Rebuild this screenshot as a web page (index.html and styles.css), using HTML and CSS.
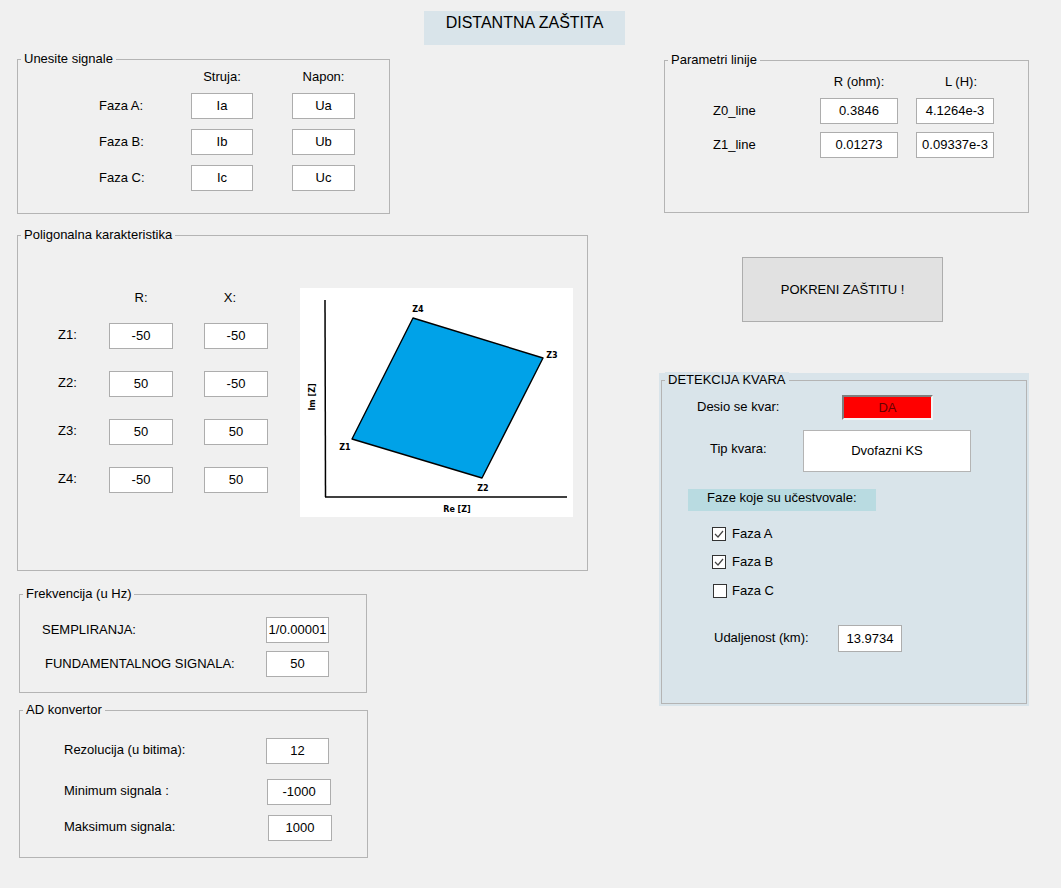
FILE: index.html
```html
<!DOCTYPE html>
<html lang="hr">
<head>
<meta charset="utf-8">
<title>Distantna zaštita</title>
<link rel="stylesheet" href="styles.css">
</head>
<body>
<div class="app">
  <div class="title">DISTANTNA ZAŠTITA</div>
  <div class="main">
    <div class="col-left">
      <div class="panel p-signals">
        <span class="panel-title">Unesite signale</span>
        <div class="sig-grid">
          <span></span><span class="hdr">Struja:</span><span class="hdr">Napon:</span>
          <span class="lbl">Faza A:</span><div class="field">Ia</div><div class="field">Ua</div>
          <span class="lbl">Faza B:</span><div class="field">Ib</div><div class="field">Ub</div>
          <span class="lbl">Faza C:</span><div class="field">Ic</div><div class="field">Uc</div>
        </div>
      </div>

      <div class="panel p-poly">
        <span class="panel-title">Poligonalna karakteristika</span>
        <div class="poly-grid">
          <span></span><span class="hdr">R:</span><span class="hdr hdr-x">X:</span>
          <span class="lbl">Z1:</span><div class="field">-50</div><div class="field">-50</div>
          <span class="lbl">Z2:</span><div class="field">50</div><div class="field">-50</div>
          <span class="lbl">Z3:</span><div class="field">50</div><div class="field">50</div>
          <span class="lbl">Z4:</span><div class="field">-50</div><div class="field">50</div>
        </div>
        <svg class="plot" width="273" height="229" viewBox="0 0 273 229">
          <rect width="273" height="229" fill="#fff"/>
          <polygon points="52,151 113,30 243,70 182,190" fill="#00a2e8" stroke="#000" stroke-width="1.4" stroke-linejoin="round"/>
          <line x1="25" y1="12" x2="25.5" y2="209" stroke="#000" stroke-width="1.5"/>
          <line x1="25" y1="209" x2="267" y2="209" stroke="#000" stroke-width="1.5"/>
          <g class="plot-lbl">
            <text x="118" y="24">Z4</text>
            <text x="252" y="70">Z3</text>
            <text x="45" y="162">Z1</text>
            <text x="183" y="203">Z2</text>
            <text x="157" y="224">Re [Z]</text>
            <text x="15" y="109" transform="rotate(-90 15 109)">Im [Z]</text>
          </g>
        </svg>
      </div>

      <div class="panel p-freq">
        <span class="panel-title">Frekvencija (u Hz)</span>
        <div class="freq-grid">
          <span class="lbl">SEMPLIRANJA:</span><div class="field">1/0.00001</div>
          <span class="lbl lbl-indent">FUNDAMENTALNOG SIGNALA:</span><div class="field">50</div>
        </div>
      </div>

      <div class="panel p-ad">
        <span class="panel-title">AD konvertor</span>
        <div class="ad-row">
          <span class="lbl">Rezolucija (u bitima):</span><div class="field">12</div>
        </div>
        <div class="ad-row ad-row2">
          <span class="lbl">Minimum signala :</span><div class="field">-1000</div>
        </div>
        <div class="ad-row ad-row3">
          <span class="lbl">Maksimum signala:</span><div class="field">1000</div>
        </div>
      </div>
    </div>

    <div class="col-right">
      <div class="panel p-line">
        <span class="panel-title">Parametri linije</span>
        <div class="line-grid">
          <span></span><span class="hdr">R (ohm):</span><span class="hdr hdr-l">L (H):</span>
          <span class="lbl">Z0_line</span><div class="field">0.3846</div><div class="field">4.1264e-3</div>
          <span class="lbl">Z1_line</span><div class="field">0.01273</div><div class="field">0.09337e-3</div>
        </div>
      </div>

      <div class="btn">POKRENI ZAŠTITU !</div>

      <div class="detect-wrap">
        <div class="panel p-detect">
          <span class="panel-title">DETEKCIJA KVARA</span>
          <div class="d-row d-fault">
            <span class="d-lbl-fault">Desio se kvar:</span>
            <div class="alarm">DA</div>
          </div>
          <div class="d-row d-type">
            <span class="d-lbl-type">Tip kvara:</span>
            <div class="type-box">Dvofazni KS</div>
          </div>
          <div class="phases-hdr">Faze koje su učestvovale:</div>
          <div class="chk-row chk-a">
            <span class="chk"><svg width="12" height="12" viewBox="0 0 12 12"><polyline points="2,6 5,9 10,3" fill="none" stroke="#444" stroke-width="1.2"/></svg></span>
            <span class="chk-lbl">Faza A</span>
          </div>
          <div class="chk-row chk-b">
            <span class="chk"><svg width="12" height="12" viewBox="0 0 12 12"><polyline points="2,6 5,9 10,3" fill="none" stroke="#444" stroke-width="1.2"/></svg></span>
            <span class="chk-lbl">Faza B</span>
          </div>
          <div class="chk-row chk-c">
            <span class="chk"></span>
            <span class="chk-lbl">Faza C</span>
          </div>
          <div class="d-row d-dist">
            <span class="d-lbl-dist">Udaljenost (km):</span>
            <div class="field dist-field">13.9734</div>
          </div>
        </div>
      </div>
    </div>
  </div>
</div>
</body>
</html>
```

FILE: styles.css
```css
* { box-sizing: border-box; }
html, body { margin: 0; padding: 0; }
body {
  background: #f0f0f0;
  font-family: "Liberation Sans", Arial, sans-serif;
  font-size: 13px;
  line-height: 16px;
  color: #000;
  width: 1061px;
  height: 888px;
  overflow: hidden;
}
.app { padding-top: 11px; }

.title {
  margin-left: 424px;
  width: 201px;
  height: 34px;
  background: #d9e4ea;
  font-size: 16px;
  line-height: 18px;
  text-align: center;
  padding-top: 3px;
}

.main {
  display: flex;
  align-items: flex-start;
  margin-top: 14px;
}
.col-left { margin-left: 17px; width: 571px; }
.col-right { margin-left: 71px; width: 370px; }

/* generic panel */
.panel {
  position: relative;
  border: 1px solid #b4b4b4;
}
.panel-title {
  position: absolute;
  top: -9px;
  left: 3px;
  padding: 0 3px;
  background: #f0f0f0;
  line-height: 16px;
  white-space: nowrap;
}

.field {
  background: #fff;
  border: 1px solid #adadad;
  height: 26px;
  display: flex;
  align-items: center;
  justify-content: center;
  white-space: nowrap;
}
.lbl { white-space: nowrap; align-self: center; }
.hdr { text-align: center; white-space: nowrap; }

/* Unesite signale */
.p-signals {
  width: 373px;
  height: 155px;
  padding: 9px 0 0 81px;
}
.sig-grid {
  display: grid;
  grid-template-columns: 53px 62px 63px;
  grid-template-rows: 14px 26px 26px 26px;
  column-gap: 39px;
  row-gap: 10px;
}

/* Poligonalna karakteristika */
.p-poly {
  width: 571px;
  height: 336px;
  margin-top: 21px;
  padding: 52px 0 0 40px;
  display: flex;
  align-items: flex-start;
}
.poly-grid {
  margin-top: 2px;
  display: grid;
  grid-template-columns: 20px 64px 64px;
  grid-template-rows: 11px repeat(4, 26px);
  column-gap: 31px;
  row-gap: 22px;
}
.poly-grid .hdr { align-self: start; }
.poly-grid .lbl { padding-bottom: 2px; }
.hdr-x { padding-right: 12px; }
.plot { display: block; margin-left: 32px; }
.plot-lbl text {
  font-family: "DejaVu Sans", Verdana, sans-serif;
  font-size: 8px;
  font-weight: bold;
  text-anchor: middle;
  fill: #000;
}

/* Frekvencija */
.p-freq {
  width: 348px;
  height: 99px;
  margin: 23px 0 0 2px;
  padding: 22px 0 0 22px;
}
.freq-grid {
  display: grid;
  grid-template-columns: 224px 63px;
  grid-template-rows: 26px 26px;
  row-gap: 8px;
}
.lbl-indent { padding-left: 3px; }

/* AD konvertor */
.p-ad {
  width: 349px;
  height: 148px;
  margin: 17px 0 0 2px;
  padding: 27px 0 0 44px;
}
.ad-row {
  display: flex;
  align-items: center;
}
.ad-row .lbl { width: 202px; padding-bottom: 3px; }
.ad-row .field { width: 63px; }
.ad-row2 { margin-top: 15px; }
.ad-row2 .field { margin-left: 1px; width: 64px; }
.ad-row3 { margin-top: 10px; }
.ad-row3 .field { margin-left: 2px; width: 64px; }

/* Parametri linije */
.p-line {
  width: 365px;
  height: 153px;
  margin: 1px 0 0 5px;
  padding: 13px 0 0 48px;
}
.line-grid {
  display: grid;
  grid-template-columns: 89px 78px 78px;
  grid-template-rows: 16px 26px 26px;
  column-gap: 18px;
  row-gap: 8px;
}
.hdr-l { padding-left: 12px; }

/* Button */
.btn {
  margin: 44px 0 0 83px;
  width: 201px;
  height: 65px;
  background: #e1e1e1;
  border: 1px solid #adadad;
  display: flex;
  align-items: center;
  justify-content: center;
  white-space: nowrap;
}

/* Detekcija kvara */
.detect-wrap {
  margin-top: 51px;
  width: 370px;
  background: #d9e4ea;
  padding: 7px 2px 2px 2px;
}
.p-detect {
  height: 324px;
  background: #d9e4ea;
}
.p-detect .panel-title { background: #d9e4ea; }
.d-row { display: flex; align-items: center; }
.d-fault { margin-top: 14px; padding-left: 35px; }
.d-lbl-fault { width: 145px; padding-bottom: 2px; }
.alarm {
  width: 91px;
  height: 25px;
  background: #ff0000;
  border: 2px solid;
  border-color: #7f7f7f #f4f4f4 #f4f4f4 #7f7f7f;
  color: #6a0000;
  display: flex;
  align-items: center;
  justify-content: center;
}
.d-type { margin-top: 10px; padding-left: 48px; }
.d-lbl-type { width: 93px; padding-bottom: 4px; }
.type-box {
  width: 168px;
  height: 42px;
  background: #fff;
  border: 1px solid #b4b4b4;
  display: flex;
  align-items: center;
  justify-content: center;
}
.phases-hdr {
  margin: 17px 0 0 26px;
  width: 188px;
  height: 22px;
  background: #b9dbe1;
  padding: 1px 0 0 19px;
  white-space: nowrap;
}
.chk-row {
  display: flex;
  align-items: center;
  height: 16px;
  padding-left: 50px;
}
.chk-a { margin-top: 15px; }
.chk-b { margin-top: 12px; }
.chk-c { margin-top: 13px; padding-left: 51px; }
.chk {
  width: 14px;
  height: 14px;
  border: 1px solid #333;
  background: #fff;
  display: flex;
  align-items: center;
  justify-content: center;
}
.chk-lbl { margin-left: 6px; }
.chk-c .chk-lbl { margin-left: 5px; }
.d-dist { margin-top: 26px; padding-left: 52px; }
.d-lbl-dist { width: 124px; padding-bottom: 2px; }
.dist-field { width: 64px; height: 27px; }
```
